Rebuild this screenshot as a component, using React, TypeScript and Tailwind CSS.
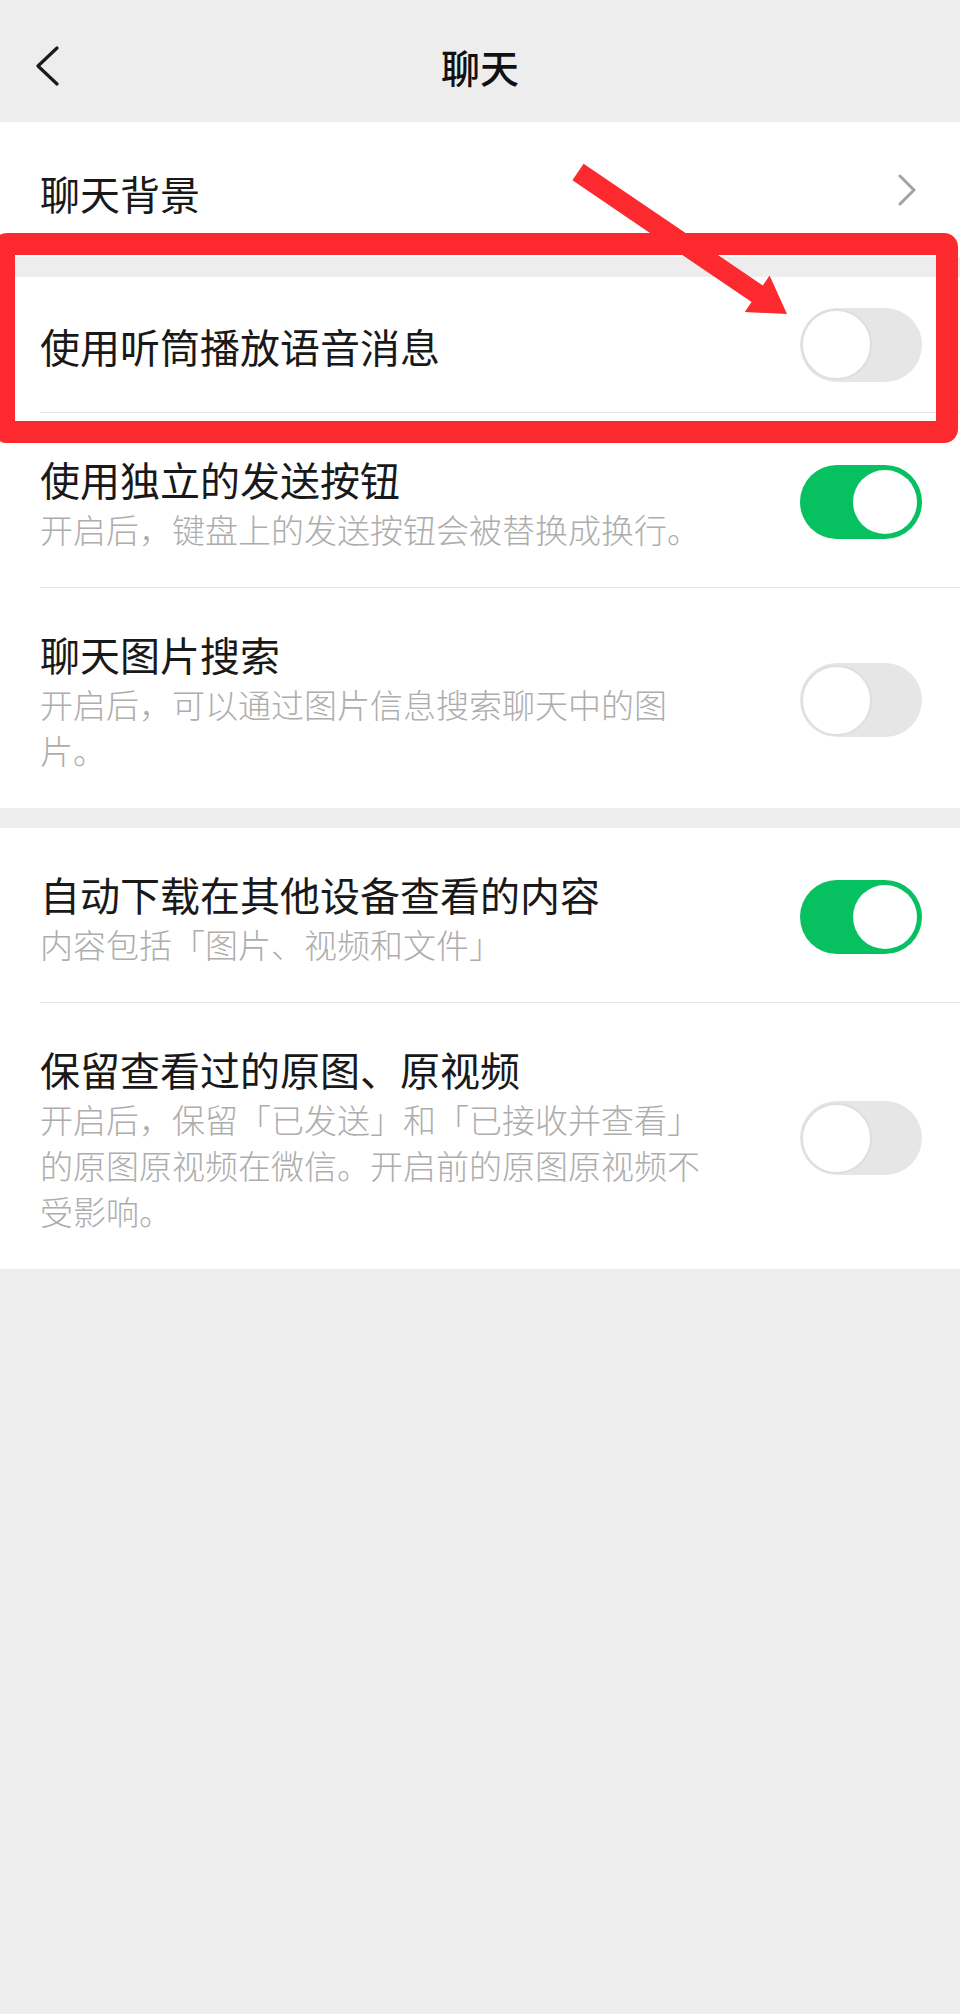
import React from "react";

function Toggle({ on }: { on: boolean }) {
  if (on) {
    return (
      <div className="w-[122px] h-[74px] rounded-full bg-[#07c160] flex items-center justify-end pr-[5px] shrink-0">
        <div className="w-[64px] h-[64px] rounded-full bg-white" />
      </div>
    );
  }
  return (
    <div className="w-[122px] h-[74px] rounded-full bg-[#e6e6e6] flex items-center pl-px shrink-0">
      <div className="w-[71px] h-[71px] rounded-full bg-white border-[2px] border-[#dedede]" />
    </div>
  );
}

function Divider() {
  return <div className="ml-[40px] h-px bg-[#e6e6e6]" />;
}

function SwitchRow({ title, sub, on }: { title: string; sub?: string; on: boolean }) {
  if (!sub) {
    return (
      <div className="h-[135px] flex items-center pl-[40px] pr-[38px]">
        <div className="flex-1 text-[40px] leading-[54px] text-[#191919] pt-[3px]">{title}</div>
        <Toggle on={on} />
      </div>
    );
  }
  return (
    <div className="flex items-center pl-[40px] pr-[38px] pt-[39px] pb-[35px]">
      <div className="flex-1 min-w-0">
        <div className="text-[40px] leading-[54px] text-[#191919]">{title}</div>
        <div className="text-[33px] leading-[46px] font-light text-[#adadad] max-w-[680px]">{sub}</div>
      </div>
      <Toggle on={on} />
    </div>
  );
}

export default function App() {
  return (
    <div className="relative w-[960px] min-h-[2014px] bg-[#ededed] font-['Noto_Sans_CJK_SC',sans-serif] overflow-hidden">
      {/* Header */}
      <div className="h-[122px] grid grid-cols-[1fr_auto_1fr] items-center pt-[10px]">
        <div className="pl-[34px] flex items-center">
          <svg width="26" height="40" viewBox="0 0 26 40" fill="none">
            <path d="M23 2 L4 20 L23 38" stroke="#1a1a1a" strokeWidth="3.2" strokeLinecap="round" strokeLinejoin="round" />
          </svg>
        </div>
        <div className="text-[39px] leading-[54px] font-medium text-[#111111]">聊天</div>
        <div />
      </div>

      {/* Section 1 */}
      <div className="bg-white">
        <div className="h-[135px] flex items-center justify-between pl-[40px] pr-[44px]">
          <div className="text-[40px] leading-[54px] text-[#191919] pt-[6px]">聊天背景</div>
          <svg width="18" height="32" viewBox="0 0 18 32" fill="none">
            <path d="M2 2 L16 16 L2 30" stroke="#a3a3a3" strokeWidth="3" strokeLinecap="round" strokeLinejoin="round" />
          </svg>
        </div>
      </div>

      <div className="h-[20px]" />

      {/* Section 2 */}
      <div className="bg-white">
        <SwitchRow title="使用听筒播放语音消息" on={false} />
        <Divider />
        <SwitchRow title="使用独立的发送按钮" sub="开启后，键盘上的发送按钮会被替换成换行。" on={true} />
        <Divider />
        <SwitchRow title="聊天图片搜索" sub="开启后，可以通过图片信息搜索聊天中的图片。" on={false} />
      </div>

      <div className="h-[20px]" />

      {/* Section 3 */}
      <div className="bg-white">
        <SwitchRow title="自动下载在其他设备查看的内容" sub="内容包括「图片、视频和文件」" on={true} />
        <Divider />
        <SwitchRow
          title="保留查看过的原图、原视频"
          sub="开启后，保留「已发送」和「已接收并查看」的原图原视频在微信。开启前的原图原视频不受影响。"
          on={false}
        />
      </div>

      {/* Annotation overlay: red box */}
      <div className="absolute left-[-7px] top-[233px] w-[965px] h-[210px] border-[22px] border-[#fc2a2f] rounded-[14px] pointer-events-none" />

      {/* Annotation overlay: red arrow */}
      <svg className="absolute left-0 top-0 pointer-events-none" width="960" height="400" viewBox="0 0 960 400">
        <polygon
          points="583.6,163.7 762.8,285.5 769.6,275.6 787,314 744.8,312 751.6,302.1 572.4,180.3"
          fill="#fc2a2f"
        />
      </svg>
    </div>
  );
}
